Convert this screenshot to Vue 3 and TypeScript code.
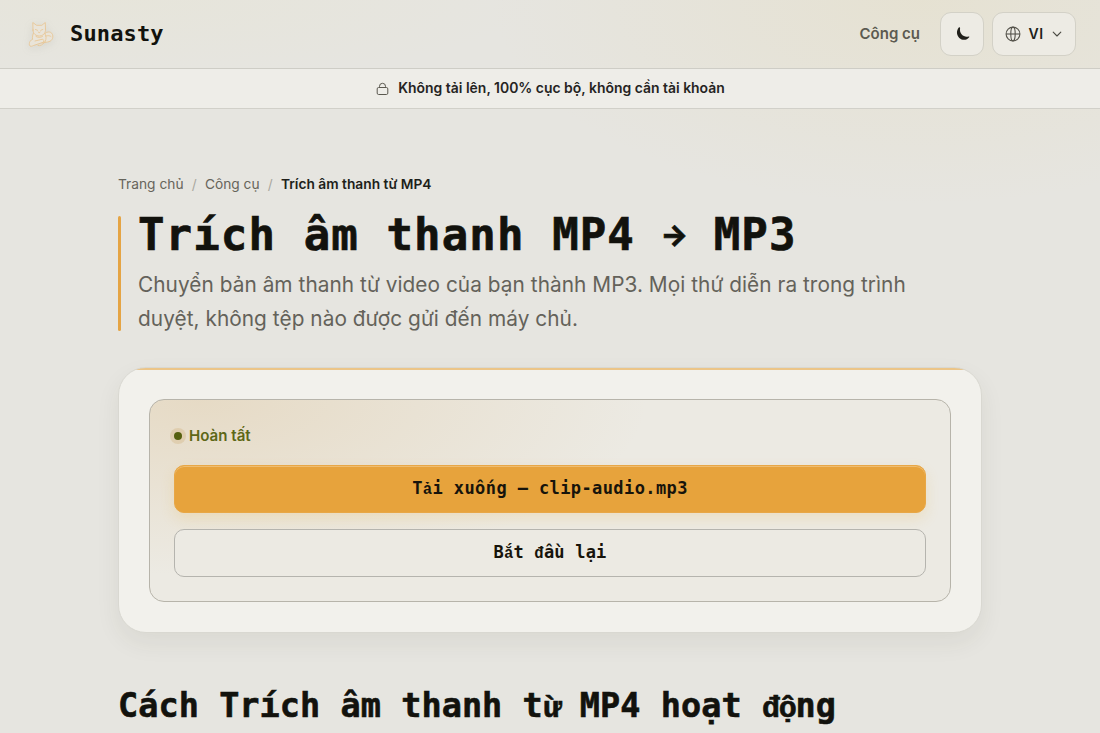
<script setup lang="ts">
interface Crumb {
  label: string
  current?: boolean
}

const crumbs: Crumb[] = [
  { label: 'Trang chủ' },
  { label: 'Công cụ' },
  { label: 'Trích âm thanh từ MP4', current: true },
]
</script>

<template>
  <div class="page">
    <header class="topbar">
      <a class="brand">
        <svg class="logo" viewBox="0 0 32 32" fill="#e9e4d9" stroke="#e8c18a" stroke-width="0.75" stroke-linejoin="round" stroke-linecap="round">
          <path d="M19 17c1-3.500 7-4.500 8.500-.5 1.200 4-1 7-5 7.500l-5 1z" />
          <path d="M8.500 15c-1.500 3-1.200 6-.5 9h12c1.500-3 1.500-6-.5-9z" />
          <path d="M8 12L7.800 4.500l3.700 2.800h5.300l3.500-2.800.2 8c-.3 3.500-3 5.500-6.200 5.500S8 16 8 12z" />
          <path d="M7 21.500c-2.500 1.500-3.500 4.500-2 6.500 1 .8 2.500 0 3.500-.5l9-3c2-1 1.500-3.500-.5-3.200l-7 1.700M13 27.500c2 .6 4.500-.5 5.500-2" />
          <path fill="none" d="M10.500 11.500l2 .8M17.800 11.500l-2 .8M13.200 14l1 .7 1-.7M11 18.500c2 1.200 4.500 1.200 6.500 0M21 18c2-.5 4-.5 5 .5" />
        </svg>
        <span class="brand-name">Sunasty</span>
      </a>
      <nav class="nav">
        <a class="nav-link">Công cụ</a>
        <button class="tool theme" type="button" aria-label="Theme">
          <svg width="16" height="16" viewBox="0 0 16 16"><path d="M3.800 1.600C1.100 5 1.500 9.200 4.300 12c3 2.700 7.600 2.400 9.900-.7.3-.5 0-.9-.5-.8-2.800.7-5.200 0-6.900-1.900C5.100 6.800 4.700 4.500 5.100 2.100c.1-.7-.8-1.100-1.300-.5z" fill="#201f1a" /></svg>
        </button>
        <button class="tool lang" type="button">
          <svg width="16" height="16" viewBox="0 0 16 16" fill="none" stroke="#55534b" stroke-width="1.100"><circle cx="8" cy="8" r="6.900" /><ellipse cx="8" cy="8" rx="2.200" ry="6.900" /><path d="M1 8h14" /></svg>
          <span class="lang-code">VI</span>
          <svg class="chevron" width="10" height="10" viewBox="0 0 10 10" fill="none" stroke="#4a4942" stroke-width="1.100" stroke-linecap="round" stroke-linejoin="round"><path d="M1.200 3.200L5 7l3.800-3.800" /></svg>
        </button>
      </nav>
    </header>

    <div class="notice">
      <svg width="13" height="14" viewBox="0 0 13 14" fill="none" stroke="#5a584f" stroke-width="1"><rect x="1.200" y="5.500" width="10.600" height="7" rx="1.400" /><path d="M3.500 5.500V4.300a3 3 0 0 1 6 0v1.200" /></svg>
      <span class="notice-text">Không tải lên, 100% cục bộ, không cần tài khoản</span>
    </div>

    <main class="content">
      <nav class="crumbs">
        <template v-for="(c, i) in crumbs" :key="c.label">
          <span v-if="i > 0" class="sep">/</span>
          <span :class="{ current: c.current }">{{ c.label }}</span>
        </template>
      </nav>

      <section class="hero">
        <h1>Trích âm thanh MP4 <span class="arrow">→</span> MP3</h1>
        <p>Chuyển bản âm thanh từ video của bạn thành MP3. Mọi thứ diễn ra trong trình duyệt, không tệp nào được gửi đến máy chủ.</p>
      </section>

      <section class="card">
        <div class="panel">
          <div class="status"><i class="dot"></i><span class="status-text">Hoàn tất</span></div>
          <button class="btn primary" type="button">T<span class="alt">ả</span>i xuống — clip-audio.mp3</button>
          <button class="btn secondary" type="button">B<span class="alt">ắ</span>t <span class="alt">đ</span>ầu lại</button>
        </div>
      </section>

      <h2>Cách Trích âm thanh t<span class="alt">ừ</span> MP4 hoạt <span class="alt">độ</span>ng</h2>
    </main>
  </div>
</template>

<style>
html,
body {
  margin: 0;
  overflow: hidden;
}
</style>

<style scoped>
.page {
  box-sizing: border-box;
  height: 733px;
  overflow: hidden;
  color: #12120d;
  font-family: Inter, "Liberation Sans", sans-serif;
  background:
    radial-gradient(ellipse 430px 205px at 920px 0, rgba(228, 210, 150, 0.19), transparent 100%),
    radial-gradient(ellipse 420px 80px at 120px 0, rgba(232, 228, 190, 0.16), transparent 100%),
    #e6e5e0;
}
.topbar {
  box-sizing: border-box;
  height: 69px;
  padding: 0 24px 1px 25px;
  border-bottom: 1px solid #cecdc6;
  display: flex;
  align-items: center;
  justify-content: space-between;
}
.brand {
  display: flex;
  align-items: center;
  gap: 13px;
}
.logo {
  width: 32px;
  height: 32px;
  filter: drop-shadow(0 2px 4px rgba(110, 110, 100, 0.12));
}
.brand-name {
  font: 700 22px/32px "DejaVu Sans Mono", monospace;
  letter-spacing: 0.15px;
}
.nav {
  display: flex;
  align-items: center;
}
.nav-link {
  margin-right: 20px;
  font-size: 15px;
  font-weight: 600;
  color: #5c5a51;
}
.tool {
  box-sizing: border-box;
  height: 44px;
  padding: 0;
  border: 1px solid #d3d1c7;
  border-radius: 11px;
  background: #edebe4;
  display: flex;
  align-items: center;
  justify-content: center;
}
.theme {
  width: 44px;
  padding-left: 2px;
}
.lang {
  width: 84px;
  margin-left: 8px;
  padding-right: 1px;
}
.lang-code {
  margin-left: 7px;
  font: 600 14px/20px Inter, sans-serif;
  letter-spacing: 0.5px;
  color: #201f1a;
}
.chevron {
  margin-left: 8px;
}
.notice {
  box-sizing: border-box;
  height: 40px;
  padding-left: 1px;
  border-bottom: 1px solid #d1d0c9;
  background: #eeede8;
  display: flex;
  align-items: center;
  justify-content: center;
  gap: 9px;
  font-size: 13.950px;
  font-weight: 600;
  color: #25241f;
}
.notice-text {
  padding-bottom: 2px;
}
.content {
  width: 864px;
  margin: 0 auto;
  padding-top: 65px;
}
.crumbs {
  display: flex;
  gap: 8.200px;
  font-size: 13.750px;
  line-height: 20px;
  color: #66645b;
}
.sep {
  color: #aaa89f;
}
.current {
  font-weight: 600;
  color: #201f1a;
}
.hero {
  display: flex;
  flex-direction: column;
  gap: 9px;
  box-sizing: border-box;
  height: 115px;
  margin-top: 22px;
  padding-left: 20px;
  position: relative;
}
.hero::before {
  content: "";
  position: absolute;
  left: 0;
  top: 0;
  width: 3px;
  height: 115px;
  border-radius: 2px;
  background: #e5a444;
}
h1 {
  flex: none;
  height: 48px;
  margin: -5px 0 0;
  font: 700 44px/48px "DejaVu Sans Mono", monospace;
  letter-spacing: 1.120px;
  -webkit-text-stroke: 0.700px #12120d;
  white-space: nowrap;
}
.arrow {
  display: inline-flex;
  justify-content: center;
  width: 23.500px;
  font: 800 29px/30px Inter, sans-serif;
  letter-spacing: 0;
  vertical-align: 5px;
}
.hero p {
  margin: 0;
  max-width: 790px;
  font-size: 20.800px;
  line-height: 34px;
  letter-spacing: 0.050px;
  color: #64625a;
}
.card {
  box-sizing: border-box;
  height: 266px;
  margin-top: 36px;
  padding: 31px 30px 30px;
  border: 1px solid #d9d8d1;
  border-radius: 28px;
  background: linear-gradient(#ecc588, #ecc588) top / 100% 2px no-repeat, #f2f1ec;
  box-shadow: 0 10px 24px rgba(60, 60, 30, 0.07);
}
.panel {
  box-sizing: border-box;
  height: 203px;
  padding: 24px;
  border: 1px solid #b7b4aa;
  border-radius: 15px;
  background:
    radial-gradient(ellipse 450px 175px at 6% 0, rgba(215, 178, 120, 0.28), transparent 100%),
    #eceae3;
}
.status {
  display: flex;
  align-items: center;
  gap: 7px;
  height: 24px;
  font-size: 15.100px;
  font-weight: 600;
  color: #5d6717;
}
.status-text {
  padding-bottom: 2px;
}
.dot {
  width: 8px;
  height: 8px;
  border-radius: 50%;
  background: #56600f;
  box-shadow: 0 0 0 4px rgba(200, 160, 90, 0.25);
}
.btn {
  box-sizing: border-box;
  display: block;
  width: 100%;
  height: 48px;
  padding: 0;
  border-radius: 10px;
  color: #17140b;
  font: 700 17px/44px "DejaVu Sans Mono", monospace;
}
.primary {
  margin-top: 17px;
  border: 1px solid #e8a746;
  background: #e7a33c;
  letter-spacing: 0.400px;
  box-shadow: inset 0 1px 0 #efbd71, 0 6px 14px rgba(235, 180, 70, 0.2);
}
.secondary {
  margin-top: 16px;
  border: 1px solid #b5b4ae;
  background: #eceae3;
  letter-spacing: 0.200px;
}
.alt {
  font-family: "Liberation Mono", monospace;
  font-size: 0.920em;
}
h2 {
  margin: 48px 0 0;
  font: 700 33.500px/50px "DejaVu Sans Mono", monospace;
  letter-spacing: 0.060px;
  -webkit-text-stroke: 0.600px #12120d;
  white-space: nowrap;
}
h2 .alt {
  font-size: 0.900em;
  letter-spacing: -1.300px;
}
</style>
